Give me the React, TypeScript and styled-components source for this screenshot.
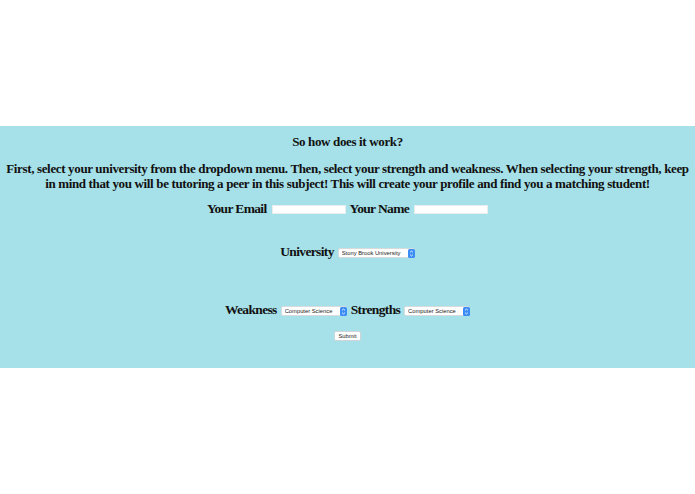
import styled, { createGlobalStyle } from "styled-components";

const Global = createGlobalStyle`
  html, body {
    margin: 0;
    padding: 0;
    background: #ffffff;
    font-family: "Liberation Serif", "Times New Roman", serif;
    color: #111;
  }
`;

const Band = styled.section`
  margin-top: 126px;
  height: 242px;
  box-sizing: border-box;
  padding-top: 8px;
  background: #a6e0e8;
  text-align: center;
`;

const Heading = styled.h3`
  margin: 0;
  font-size: 13px;
  line-height: 15px;
  letter-spacing: -0.35px;
  font-weight: bold;
`;

const Intro = styled.p`
  margin: 12px 4px 0;
  font-size: 13px;
  line-height: 15px;
  letter-spacing: -0.35px;
  font-weight: bold;
`;

const Row = styled.div<{ $gap: number }>`
  display: flex;
  justify-content: center;
  align-items: center;
  gap: 4px;
  margin-top: ${(p) => p.$gap}px;
  height: 16px;
`;

const Label = styled.label`
  font-size: 13.5px;
  letter-spacing: -0.65px;
  font-weight: bold;
  line-height: 16px;
`;

const TextInput = styled.input`
  width: 74px;
  height: 9px;
  box-sizing: border-box;
  border: 1px solid #e6eef0;
  background: #ffffff;
  padding: 0;
  margin: 0 0 0 1px;
  outline: none;
`;

const SelectWrap = styled.span<{ $w: number }>`
  display: inline-flex;
  align-items: center;
  width: ${(p) => p.$w}px;
  height: 10px;
  box-sizing: border-box;
  background: #ffffff;
  border: 1px solid #d6dcde;
  border-radius: 2px;
  margin-top: 2px;
`;

const Select = styled.select`
  appearance: none;
  -webkit-appearance: none;
  flex: 1;
  min-width: 0;
  height: 8px;
  border: none;
  background: transparent;
  padding: 0 0 0 3px;
  font-family: "Liberation Sans", Arial, sans-serif;
  font-size: 5.8px;
  line-height: 8px;
  color: #222;
  outline: none;
`;

const Stepper = styled.svg`
  flex: none;
  width: 7px;
  height: 9px;
  margin-right: -1px;
`;

const SubmitRow = styled.div`
  margin-top: 13px;
  display: flex;
  justify-content: center;
`;

const SubmitButton = styled.button`
  height: 10px;
  width: 27px;
  padding: 0;
  box-sizing: border-box;
  border: 1px solid #cfd4d6;
  border-radius: 2px;
  background: #ffffff;
  font-family: "Liberation Sans", Arial, sans-serif;
  font-size: 5.8px;
  line-height: 8px;
  color: #222;
`;

const StepperIcon = () => (
  <Stepper viewBox="0 0 7 9">
    <rect x="0" y="0" width="7" height="9" rx="1.6" fill="#3b8df5" />
    <path d="M2 3.4 L3.5 2 L5 3.4 M2 5.6 L3.5 7 L5 5.6" stroke="#fff" strokeWidth="0.8" fill="none" />
  </Stepper>
);

const Dropdown = ({ w, options }: { w: number; options: string[] }) => (
  <SelectWrap $w={w}>
    <Select>
      {options.map((o) => (
        <option key={o}>{o}</option>
      ))}
    </Select>
    <StepperIcon />
  </SelectWrap>
);

const subjects = ["Computer Science", "Mathematics", "Physics", "Chemistry", "Biology"];

export default function App() {
  return (
    <>
      <Global />
      <Band>
        <Heading>So how does it work?</Heading>
        <Intro>
          First, select your university from the dropdown menu. Then, select your strength and weakness. When selecting your
          strength, keep in mind that you will be tutoring a peer in this subject! This will create your profile and find you a
          matching student!
        </Intro>
        <Row $gap={10}>
          <Label>Your Email</Label>
          <TextInput type="email" />
          <Label>Your Name</Label>
          <TextInput type="text" />
        </Row>
        <Row $gap={27}>
          <Label>University</Label>
          <Dropdown w={77} options={["Stony Brook University", "Columbia University", "NYU"]} />
        </Row>
        <Row $gap={42}>
          <Label>Weakness</Label>
          <Dropdown w={66} options={subjects} />
          <Label>Strengths</Label>
          <Dropdown w={66} options={subjects} />
        </Row>
        <SubmitRow>
          <SubmitButton type="submit">Submit</SubmitButton>
        </SubmitRow>
      </Band>
    </>
  );
}
